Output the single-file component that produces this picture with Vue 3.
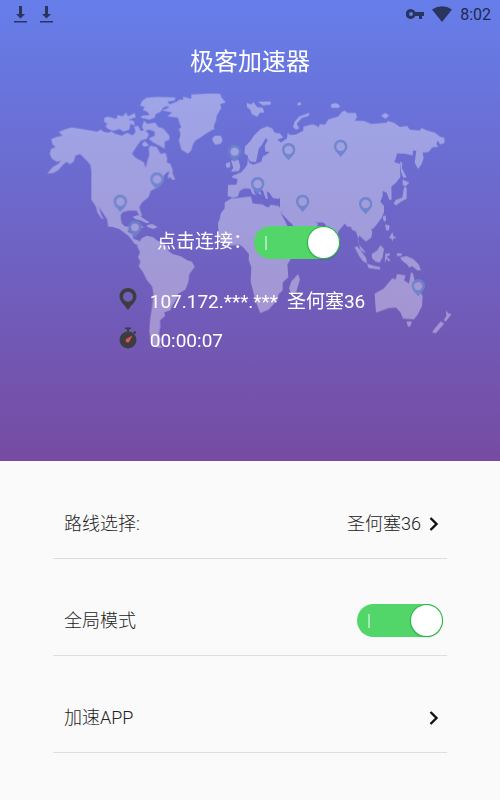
<script setup>
import { ref } from 'vue'

const connected = ref(true)
const globalMode = ref(true)

const pins = [
  [471, 538], [361, 605], [405, 682], [704, 455], [866, 450],
  [773, 552], [908, 605], [1022, 440], [1097, 612], [1255, 858],
]
</script>

<template>
  <main class="app">
    <section class="hero">
      <svg class="map" viewBox="120 255 1260 825" aria-hidden="true">
        <g fill="#fff" opacity=".36">
          <g transform="translate(120 255)">
            <path d="M22 266L38 246 52 238 64 227 50 230 36 222 29 207 33 192 47 186 37 178 34 162 50 156 68 152 56 141 72 134 94 127 120 131 150 136 172 140 182 133 190 140 205 143 214 139 225 146 245 152 262 143 278 151 287 140 282 125 294 122 302 138 316 136 327 148 320 162 303 166 293 180 276 206 286 218 302 226 312 232 317 249 323 224 328 210 326 190 332 182 350 186 362 207 376 203 382 220 380 232 391 236 398 258 380 262 371 272 369 290 354 306 332 318 326 336 306 352 298 366 301 378 306 392 300 395 290 377 270 376 250 381 241 390 238 425 204 425 202 404 176 365 185 392 192 402 184 400 172 382 168 366 154 344 154 258 151 240 143 230 120 207 106 212 101 230 88 238 82 230 72 236 54 256 40 264Z" />
            <path d="M384 270L397 246 398 266 406 284 396 284 391 276 384 282Z" />
            <path d="M193 98L205 95 230 102 232 90 248 94 258 82 264 94 284 84 287 97 264 104 282 108 284 122 271 116 268 134 250 140 238 132 220 138 204 132 196 124 202 116 192 110Z" />
            <path d="M300 62L306 48 320 38 350 36 406 37 404 46 382 50 389 58 370 68 362 80 346 88 344 98 328 104 302 98 306 92 330 90 318 78 308 76 314 66Z" />
            <path d="M306 126L312 107 322 116 346 113 354 126 370 130 388 152 388 164 374 170 374 192 362 184 350 178 336 170 326 160 344 152 344 140 328 134 312 138Z" />
            <path d="M305 178L314 168 328 182 312 185Z" />
            <path d="M366 76L388 67 378 62 410 50 418 44 454 44 454 34 500 28 540 26 545 38 557 52 541 56 537 80 530 92 528 108 520 124 524 132 505 140 486 154 466 167 458 180 454 196 444 206 424 194 416 164 424 150 416 132 426 126 420 120 414 98 382 94 396 82Z" />
          </g>
          <g transform="translate(300 630)">
            <path d="M8 0L22 26 29 48 59 58 86 78 104 102 116 106 124 98 112 90 100 86 98 72 84 66 88 50 74 49 65 40 61 20 60 0Z" />
            <path d="M98 20L116 15 136 29 149 37 140 40 124 32 104 26ZM141 45L157 42 173 51 160 57 142 51ZM119 49L131 50 127 55Z" />
            <path d="M111 108L125 85 140 77 160 82 172 92 186 96 198 106 206 124 218 132 242 139 262 151 276 155 284 170 268 193 265 216 256 239 234 251 230 266 216 288 211 301 193 307 195 318 180 331 181 350 177 369 182 390 178 402 187 414 169 412 153 395 148 365 150 330 156 290 160 250 156 229 140 210 129 187 116 169 121 155 114 142 120 126Z" />
          </g>
          <g transform="translate(570 255)">
            <path d="M5 42L4 28 60 26 84 28 92 40 70 43 106 50 90 57 94 70 80 85 78 96 68 112 73 124 52 132 62 138 44 146 10 165 0 190 -30 160 -20 35Z" />
            <path d="M66 162L74 152 92 152 98 165 92 176 76 179 70 171ZM107 236L120 231 121 246 110 249ZM123 226L145 224 151 244 147 258 123 260 130 248Z" />
            <path d="M170 54L184 58 190 51 201 66 218 68 223 82 210 83 201 96 185 87 181 74 171 66ZM203 50L241 49 243 58 219 61ZM321 56L330 51 335 58 325 62Z" />
            <path d="M309 126L314 109 328 94 358 83 357 92 336 99 320 116 328 130 318 134Z" />
            <path d="M430 104L410 122 390 117 384 130 370 117 366 137 340 137 318 148 300 150 293 143 291 160 273 172 262 164 280 157 270 145 254 143 247 130 232 124 212 132 192 151 180 169 165 184 163 205 174 212 172 238 164 250 153 262 128 272 126 278 143 282 139 299 114 300 113 333 128 338 144 334 149 318 163 310 181 311 186 325 198 331 191 318 197 311 208 327 215 329 205 308 219 317 227 340 234 342 230 319 238 323 248 339 264 342 270 339 270 362 275 386 300 412 430 412ZM172 217L182 230 198 231 202 212 206 192 218 176 226 161 234 163 224 182 226 199 240 201 228 209 218 215 214 230 190 239 178 234Z" fill-rule="evenodd" />
            <path d="M104 352L124 340 150 338 183 334 188 355 217 358 235 369 242 359 266 363 275 388 293 430 83 430 93 384 104 370Z" />
          </g>
          <g transform="translate(930 255)">
            <path d="M-20 125L5 118 20 122 30 130 29 119 45 118 55 103 85 94 96 80 105 77 113 84 138 84 141 97 134 107 162 108 184 117 230 113 232 108 252 113 270 126 291 123 300 134 330 136 334 129 353 137 375 143 390 155 403 158 404 174 390 178 383 166 379 176 385 185 367 187 356 201 338 203 341 219 334 239 324 252 314 233 319 197 309 197 308 211 286 206 261 205 257 222 252 231 270 237 271 276 258 293 244 305 245 343 238 345 230 323 218 318 218 332 211 350 222 363 222 382 212 400 204 414 190 430 112 425 102 413 84 416 74 420 48 419 28 400 0 402 -20 410Z" />
            <path d="M270 230L277 234 276 250 290 277 280 278 273 260ZM278 284L298 292 287 304 278 300ZM282 306L290 308 290 341 273 350 258 361 251 355 258 344 277 338ZM219 395L227 393 228 404 222 411ZM62 58L78 54 91 63 85 69 64 68ZM213 93L225 84 238 91 227 101Z" />
          </g>
          <g transform="translate(630 630)">
            <path d="M53 -8L24 38 26 56 23 76 37 98 60 107 88 104 100 112 117 132 116 150 124 171 122 215 130 246 140 282 151 309 176 299 202 270 206 252 218 241 218 218 235 201 232 163 244 144 278 108 296 90 240 65 226 34 210 10 218 -8Z" />
            <path d="M210 -10L250 48 256 62 295 72 325 43 315 35 300 32 294 22 278 12 274 -10ZM264 192L270 208 258 248 243 250 237 235 244 214Z" />
          </g>
          <g transform="translate(990 630)">
            <path d="M-70 15L-35 20 -14 42 0 73 14 110 25 64 48 36 62 40 65 59 78 65 83 80 87 103 105 125 108 130 92 120 83 90 88 77 108 95 124 83 127 64 118 48 124 43 143 35 156 23 162 -10 -70 -10Z" />
            <path d="M73 111L83 110 97 128 109 145 111 160 99 153 88 139ZM111 161L130 167 150 171 151 179 116 174ZM125 132L141 122 152 105 162 117 158 141 149 158 137 155 126 144ZM166 131L180 130 179 137 169 139 182 151 176 154 169 146 164 161ZM200 130L215 130 215 137 202 139ZM210 142L230 138 250 147 266 163 273 181 262 181 246 168 238 173 231 163 216 152ZM159 18L168 18 166 35 160 28ZM165 44L179 46 177 60 169 62ZM187 66L191 80 201 82 190 86 187 94 184 85 177 84ZM117 44L131 47 127 57 119 54Z" />
            <path d="M134 251L161 236 181 212 187 205 197 208 201 192 227 196 222 211 237 221 243 187 249 190 254 213 269 240 278 260 276 288 263 314 252 328 219 326 211 306 198 293 175 294 156 302 138 308 136 284ZM229 335L246 334 240 350 234 350ZM348 301L355 310 365 312 347 335 341 330 349 318ZM332 334L343 341 331 354 318 369 306 368 314 356Z" />
          </g>
          <circle v-for="([x, y], i) in pins" :key="i" :cx="x" :cy="y" r="13" />
        </g>
        <path
          v-for="([x, y], i) in pins"
          :key="i"
          :transform="`translate(${x} ${y})`"
          fill="#6b83cc"
          fill-opacity=".9"
          fill-rule="evenodd"
          d="M0-21C-12-21-20-12-20-1C-20 12-8 22 0 31C8 22 20 12 20-1C20-12 12-21 0-21ZM0-13A13 13 0 1 1 0 13A13 13 0 1 1 0-13Z"
        />
      </svg>

      <header class="status">
        <div class="status-group downloads">
          <svg v-for="n in 2" :key="n" width="13" height="18" viewBox="0 0 13 18" aria-hidden="true">
            <path d="M5 1h3v8h3L6.500 13.500 2 9h3zM0 16h13v1.600H0z" />
          </svg>
        </div>
        <div class="status-group">
          <svg width="18" height="12" viewBox="0 0 18 12" aria-hidden="true">
            <path fill-rule="evenodd" d="M9.300 4A5 5 0 1 0 9.300 8H13v3h3V8h2V4ZM5 4a2 2 0 1 1 0 4a2 2 0 1 1 0-4Z" />
          </svg>
          <svg width="20" height="16" viewBox="0 0 20 16" aria-hidden="true">
            <path d="M0 3.500Q10-3 20 3.500L10 16Z" />
          </svg>
          <time>8:02</time>
        </div>
      </header>

      <h1>极客加速器</h1>

      <label class="connect">
        <span>点击连接：</span>
        <input v-model="connected" class="switch" type="checkbox" role="switch">
      </label>

      <div class="info">
        <svg width="18" height="22" viewBox="0 0 18 22" aria-hidden="true">
          <path fill="#3d3d3f" fill-rule="evenodd" d="M9 0C4 0 .5 3.800.5 8.400C.5 13.500 5.500 16.500 9 22C12.500 16.500 17.500 13.500 17.500 8.400C17.500 3.800 14 0 9 0ZM9 3.800A5 5 0 1 1 9 13.800A5 5 0 1 1 9 3.800Z" />
        </svg>
        <span class="address"><span>107.172.***.***</span><span>圣何塞36</span></span>
        <svg width="18" height="22" viewBox="0 0 18 22" aria-hidden="true">
          <g fill="#3d3d3f">
            <circle cx="9" cy="13" r="8.500" />
            <path d="M6 .5h6v1.700h-2V5H8V2.200H6zM14 5.500l1.700-1.700 1.800 1.800-1.700 1.700z" />
          </g>
          <path d="M13.500 8.500L10.600 14A2 2 0 1 1 8 11.600Z" fill="#d9565c" />
        </svg>
        <time>00:00:07</time>
      </div>
    </section>

    <section class="settings">
      <button class="row" type="button">
        <span>路线选择:</span>
        <span class="value">
          圣何塞36
          <svg class="chevron" width="10" height="14" viewBox="0 0 10 14" aria-hidden="true"><path d="M1.500 1L7.500 7L1.500 13" /></svg>
        </span>
      </button>
      <label class="row">
        <span>全局模式</span>
        <input v-model="globalMode" class="switch" type="checkbox" role="switch">
      </label>
      <button class="row" type="button">
        <span>加速APP</span>
        <span class="value">
          <svg class="chevron" width="10" height="14" viewBox="0 0 10 14" aria-hidden="true"><path d="M1.500 1L7.500 7L1.500 13" /></svg>
        </span>
      </button>
    </section>
  </main>
</template>

<style>
body {
  margin: 0;
  background: #fafafa;
}
</style>

<style scoped>
.app {
  min-height: 100vh;
  font-family: Roboto, "Noto Sans CJK SC", sans-serif;
  color: #333;
  background: #fafafa;
}

.hero {
  position: relative;
  display: flex;
  flex-direction: column;
  align-items: center;
  padding-bottom: 106px;
  color: #fff;
  background: linear-gradient(#667eea, #764ba2);
}

.hero > * {
  position: relative;
}

.hero > .map {
  position: absolute;
  top: 85px;
  left: 8%;
  width: 84%;
}

.status {
  display: flex;
  align-items: center;
  justify-content: space-between;
  align-self: stretch;
  height: 28px;
  padding: 0 9px 0 14px;
  font-size: 16px;
  color: #1f2950;
}

.status svg {
  fill: #29345f;
}

.status-group {
  display: flex;
  align-items: center;
  gap: 8px;
}

.downloads {
  gap: 13px;
}

h1 {
  margin: 16px 0 0;
  font-size: 24px;
  font-weight: 400;
  line-height: 36px;
}

.connect {
  display: flex;
  align-items: center;
  gap: 2px;
  margin-top: 145px;
  padding-right: 3px;
  font-size: 19px;
  line-height: 34px;
}

.info {
  display: grid;
  grid-template-columns: 18px auto;
  align-items: start;
  gap: 11px 13px;
  margin-top: 29px;
  padding-right: 16px;
  font-size: 19px;
  line-height: 28px;
}

.address {
  display: flex;
  gap: 9px;
}

.switch {
  position: relative;
  box-sizing: border-box;
  flex: none;
  width: 86px;
  height: 33px;
  margin: 0;
  appearance: none;
  border-radius: 17px;
  background: #b8b8bd;
  cursor: pointer;
}

.switch:checked {
  background: #52d569;
}

.switch::before {
  position: absolute;
  top: 10px;
  left: 11px;
  width: 2px;
  height: 14px;
  background: #a5eab1;
  content: "";
}

.switch::after {
  position: absolute;
  top: 1px;
  left: 1px;
  width: 31px;
  height: 31px;
  border-radius: 50%;
  background: #fff;
  box-shadow: 0 0 0 1px #25b744, 0 1px 2px #0005;
  content: "";
}

.switch:checked::after {
  left: 54px;
}

.settings {
  display: flex;
  flex-direction: column;
  margin: 1px 53px 0;
}

.row {
  display: flex;
  align-items: center;
  justify-content: space-between;
  padding: 45px 4px 18px 11px;
  border: 0;
  border-bottom: 1px solid #dedede;
  font: inherit;
  font-size: 18px;
  font-weight: 300;
  line-height: 33px;
  color: #222;
  text-align: left;
  background: none;
}

.value {
  display: flex;
  align-items: center;
  gap: 8px;
  padding-right: 4px;
}

.chevron {
  fill: none;
  stroke: #111;
  stroke-width: 2.4;
}
</style>
